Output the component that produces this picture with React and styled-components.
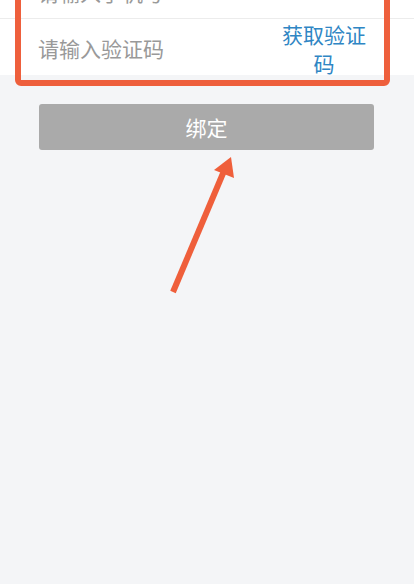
import styled, { createGlobalStyle } from "styled-components";

export default function App() {
  return (
    <>
      <GlobalStyle />
      <Page>
        <FormCard>
          <Row $height={49}>
            <Placeholder $shift={-4}>请输入手机号</Placeholder>
          </Row>
          <Row $height={56} $last>
            <Placeholder $shift={2}>请输入验证码</Placeholder>
            <CodeButton>获取验证码</CodeButton>
          </Row>
          <Highlight />
        </FormCard>
        <BindButton>绑定</BindButton>
        <Arrow viewBox="0 0 414 584" width="414" height="584">
          <line x1="173" y1="292" x2="224" y2="171" stroke="#ef5f3b" strokeWidth="6" />
          <polygon points="231,157 214,170 234,178" fill="#ef5f3b" />
        </Arrow>
      </Page>
    </>
  );
}

const GlobalStyle = createGlobalStyle`
  html, body {
    margin: 0;
    padding: 0;
    background: #f4f5f7;
    font-family: "Noto Sans CJK SC", "Noto Sans", sans-serif;
  }
`;

const Page = styled.div`
  position: relative;
  width: 414px;
  height: 584px;
  overflow: hidden;
  background: #f4f5f7;
`;

const FormCard = styled.div`
  position: relative;
  margin-top: -30px;
  background: #ffffff;
`;

const Row = styled.div`
  display: flex;
  align-items: center;
  justify-content: space-between;
  height: ${(p) => p.$height}px;
  padding: 0 46px 0 38px;
  border-bottom: ${(p) => (p.$last ? "none" : "1px solid #ececec")};
  box-sizing: border-box;
`;

const Placeholder = styled.span`
  font-size: 21px;
  color: #999999;
  margin-top: ${(p) => p.$shift}px;
`;

const CodeButton = styled.span`
  width: 88px;
  font-size: 21px;
  line-height: 29px;
  text-align: center;
  color: #2f86c4;
  margin-top: 4px;
`;

const Highlight = styled.div`
  position: absolute;
  left: 15px;
  right: 24px;
  top: 0;
  bottom: -11px;
  border: 6px solid #ee5f3c;
  border-radius: 6px;
  pointer-events: none;
`;

const BindButton = styled.div`
  display: flex;
  align-items: center;
  justify-content: center;
  height: 46px;
  margin: 29px 40px 0 39px;
  background: #aaaaaa;
  border-radius: 3px;
  color: #ffffff;
  font-size: 21px;
`;

const Arrow = styled.svg`
  position: absolute;
  left: 0;
  top: 0;
  pointer-events: none;
`;
